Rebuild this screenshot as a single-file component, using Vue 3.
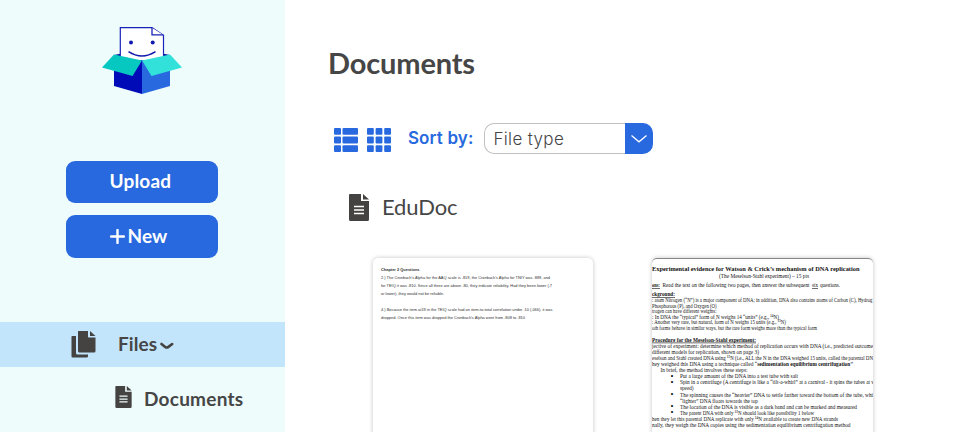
<script setup>
const chapterLines = [
  { t: 'Chapter 2 Questions', x: 8, y: 12.6, w: 38.5, b: true },
  { t: "2.) The Cronbach's Alpha for the AAQ scale is .819, the Cronbach's Alpha for TNIY was .889, and", x: 8, y: 20.6, w: 169 },
  { t: 'for TEIQ it was .810. Since all three are above .80, they indicate reliability. Had they been lower (.7', x: 8, y: 28.6, w: 171 },
  { t: 'or lower), they would not be reliable.', x: 8, y: 36.6, w: 63 },
  { t: '4.) Because the item at19 in the TEIQ scale had an item-to-total correlation under .10 (.066), it was', x: 8, y: 52.5, w: 171.5 },
  { t: "dropped. Once this item was dropped the Cronbach's Alpha went from .808 to .810", x: 8, y: 60.5, w: 144 }
]
const dnaLines = [
  { t: 'Experimental evidence for Watson & Crick’s mechanism of DNA replication', x: 0, y: 13.4, w: 207.5, b: true, s: 7 },
  { t: '(The Meselson-Stahl experiment) – 15 pts', x: 67, y: 19.8, w: 90 },
  { t: 'ons:', x: 0, y: 29.4, w: 8, b: true, u: true },
  { t: 'Read the text on the following two pages, then answer the subsequent', x: 10.5, y: 29.4, w: 147 },
  { t: 'six', x: 160, y: 29.4, w: 6, u: true },
  { t: 'questions.', x: 168, y: 29.4, w: 20 },
  { t: 'ckground:', x: 0, y: 38.4, w: 23, b: true, u: true },
  { t: ': atom Nitrogen (“N”) is a major component of DNA; in addition, DNA also contains atoms of Carbon (C), Hydrog', x: 0, y: 44.4, w: 220.5 },
  { t: 'Phosphorous (P), and Oxygen (O)', x: 0, y: 50, w: 64.5 },
  { t: 'trogen can have different weights:', x: 0, y: 55.4, w: 64.5 },
  { t: ': In DNA the “typical” form of N weighs 14 “units” (e.g., ¹⁴N)', x: 0, y: 60.8, w: 127 },
  { t: ': Another very rare, but natural, form of N weighs 15 units (e.g., ¹⁵N)', x: 0, y: 66.2, w: 134 },
  { t: 'oth forms behave in similar ways, but the rare form weighs more than the typical form', x: 0, y: 71.8, w: 165 },
  { t: 'Procedure for the Meselson-Stahl experiment:', x: 0, y: 83.6, w: 104, b: true, u: true },
  { t: 'jective of experiment: determine which method of replication occurs with DNA (i.e., predicted outcome', x: 0, y: 89.8, w: 221 },
  { t: 'different models for replication, shown on page 3)', x: 0, y: 95.8, w: 107 },
  { t: 'eselson and Stahl created DNA using ¹⁵N (i.e., ALL the N in the DNA weighed 15 units, called the parental DN', x: 0, y: 102, w: 221 },
  { t: 'hey weighed this DNA using a technique called “', x: 0, y: 108, w: 105 },
  { t: 'sedimentation equilibrium centrifugation', x: 105.2, y: 108, w: 93, b: true },
  { t: '”', x: 198.4, y: 108, w: 2.6 },
  { t: 'In brief, the method involves these steps:', x: 8.5, y: 114.2, w: 87 },
  { t: '•', x: 18.5, y: 120.6, w: 3, s: 8 },
  { t: 'Put a large amount of the DNA into a test tube with salt', x: 28, y: 120.2, w: 118 },
  { t: '•', x: 18.5, y: 126.8, w: 3, s: 8 },
  { t: 'Spin in a centrifuge (A centrifuge is like a “tilt-a-whirl” at a carnival - it spins the tubes at v', x: 28, y: 126.4, w: 194 },
  { t: 'speed)', x: 28, y: 132.4, w: 13.5 },
  { t: '•', x: 18.5, y: 139, w: 3, s: 8 },
  { t: 'The spinning causes the “heavier” DNA to settle farther toward the bottom of the tube, whi', x: 28, y: 138.6, w: 193 },
  { t: '“lighter” DNA floats towards the top', x: 28, y: 144.6, w: 78 },
  { t: '•', x: 18.5, y: 151.2, w: 3, s: 8 },
  { t: 'The location of the DNA is visible as a dark band and can be marked and measured', x: 28, y: 150.8, w: 177 },
  { t: '•', x: 18.5, y: 157.4, w: 3, s: 8 },
  { t: 'The parent DNA with only ¹⁵N should look like possibility 1 below', x: 28, y: 157, w: 134 },
  { t: 'hen they let this parental DNA replicate with only ¹⁴N available to create new DNA strands', x: 0, y: 163.2, w: 186 },
  { t: 'nally, they weigh the DNA copies using the sedimentation equilibrium centrifugation method', x: 0, y: 169.2, w: 198.5 }
]
</script>

<template>
  <div class="app">
    <aside class="sidebar">
      <svg class="logo" viewBox="0 0 105 90" width="105" height="90">
        <path d="M24 40l10-2h36l10 2v15H24z" fill="#061a9c" />
        <path d="M30.3 12.7H62l11.5 7.6V48H30.3z" fill="#fff" stroke="#1722b8" stroke-width="1.2" />
        <path d="M62 12.7v7.2h11.3" fill="#fff" stroke="#1722b8" stroke-width="1.3" />
        <circle cx="41" cy="27.4" r="2" fill="#1018b0" />
        <circle cx="62.7" cy="27.4" r="2" fill="#1018b0" />
        <path d="M38.5 36.6q13.400 8.700 27 0" fill="none" stroke="#1018b0" stroke-width="1.5" />
        <path d="M24 50l28-5v34l-28-8z" fill="#000bb8" />
        <path d="M80 50l-28-5v34l28-8z" fill="#2869e0" />
        <path d="M24 39.500l28 6-9.500 15.600L12 52.500z" fill="#06c8c0" />
        <path d="M80 39.500l-28 6 9.500 15.600L92 52.500z" fill="#32e2da" />
      </svg>
      <div class="actions">
        <button class="btn"><span class="upload">Upload</span></button>
        <button class="btn">
          <svg class="plus" viewBox="0 0 15 15" width="15" height="15"><path d="M7.500 1v13M1 7.500h13" /></svg>
          <span class="new">New</span>
        </button>
      </div>
      <nav>
        <div class="nav-row files">
          <svg viewBox="0 0 25 27" width="25" height="27" fill="#454342">
            <path d="M1 5h4v17q0 1.500 1.500 1.500H17v1.700q0 1.300-1.300 1.300H1.500Q0.500 26.500 .5 25.500V5.500Z" />
            <path d="M7.800 0H17v5.800q0 .8.800.8h6.700V20q0 1.500-1.500 1.500H8.500Q7 21.500 7 20V.8Q7 0 7.800 0Z" />
            <path d="M19 0l5.500 5H19z" />
          </svg>
          <span class="files-label">Files</span>
          <svg class="caret" viewBox="0 0 14 8" width="14" height="8"><path d="M1.500 2l3.700 2.900q1.600 1.200 3.200 0L12.200 2" /></svg>
        </div>
        <div class="nav-row sub">
          <svg viewBox="0 0 20 27" width="17" height="22">
            <path d="M1 0h11v7h8v18.500q0 1.500-1.500 1.500h-17Q0 27 0 25.500V1Q0 0 1 0zM14 0l6 5.500h-6z" fill="#454342" />
            <path d="M5 12.500h10M5 16h10M5 19.500h10" stroke="#eefcfc" stroke-width="1.500" />
          </svg>
          <span class="documents-label">Documents</span>
        </div>
      </nav>
    </aside>

    <main class="content">
      <h1><span>Documents</span></h1>
      <div class="toolbar">
        <svg class="list-icon" viewBox="0 0 24 24" width="24" height="24" fill="#2869e0">
          <template v-for="y in [0, 8.600, 17.200]" :key="y">
            <rect x="0" :y="y" width="7" height="6.800" rx="1" />
            <rect x="8.500" :y="y" width="15.500" height="6.800" rx="1" />
          </template>
        </svg>
        <svg class="grid-icon" viewBox="0 0 24 24" width="24" height="24" fill="#2869e0">
          <template v-for="y in [0, 8.600, 17.200]" :key="y">
            <rect v-for="x in [0, 8.600, 17.200]" :key="x" :x="x" :y="y" width="6.800" height="6.800" rx="1" />
          </template>
        </svg>
        <span class="sort">Sort by:</span>
        <div class="select">
          <div class="value"><span>File type</span></div>
          <div class="arrow">
            <svg viewBox="0 0 18 10" width="18" height="10"><path d="M1.500 1.500L9 7.800l7.500-6.300" /></svg>
          </div>
        </div>
      </div>
      <div class="section">
        <svg viewBox="0 0 20 27" width="20" height="27">
          <path d="M1 0h11v7h8v18.500q0 1.500-1.500 1.500h-17Q0 27 0 25.500V1Q0 0 1 0zM14 0l6 5.500h-6z" fill="#454342" />
          <path d="M5 12.500h10M5 16h10M5 19.500h10" stroke="#fff" stroke-width="1.300" />
        </svg>
        <h2>EduDoc</h2>
      </div>
      <div class="cards">
        <article class="card">
          <svg class="page sans" viewBox="0 0 220 210" width="220" height="210">
            <text v-for="(l, i) in chapterLines" :key="i" :x="l.x" :y="l.y" :textLength="l.w" lengthAdjust="spacingAndGlyphs" :class="{ bold: l.b }">{{ l.t }}</text>
          </svg>
        </article>
        <article class="card dna">
          <svg class="page serif" viewBox="0 0 221 210" width="221" height="210">
            <text v-for="(l, i) in dnaLines" :key="i" :x="l.x" :y="l.y" :textLength="l.w" lengthAdjust="spacingAndGlyphs" :font-size="l.s || 6.2" :class="{ bold: l.b, under: l.u }">{{ l.t }}</text>
          </svg>
        </article>
      </div>
    </main>
  </div>
</template>

<style>
body { background: #fff; overflow: hidden; }
</style>

<style scoped>
.app { display: flex; height: 432px; overflow: hidden; font-family: Lato, "Open Sans", sans-serif; color: #464646; }
.app * { box-sizing: border-box; }
svg { display: block; flex: none; }
span { white-space: nowrap; }
.sidebar { width: 285px; flex: none; background: #eefcfc; }
.logo { margin: 15px 0 0 90px; }
.actions { display: flex; flex-direction: column; gap: 12px; margin: 55.600px 0 0 65.600px; width: 152px; }
.btn { height: 42.700px; display: flex; align-items: center; border: 0; border-radius: 9px; background: #2869e0; color: #fff; font: 700 19px/24px Lato, sans-serif; padding: 0 0 1px 44px; }
.upload { letter-spacing: .15px; }
.plus { margin-right: 3px; }
.plus path { stroke: #fff; stroke-width: 2.400; stroke-linecap: round; }
.new { letter-spacing: 0; }
nav { margin-top: 64px; }
.nav-row { display: flex; align-items: center; font-weight: 700; }
.files { height: 45px; background: #c2e5fb; padding-left: 71px; }
.files-label { margin: -2px 0 0 22px; font-size: 19px; letter-spacing: .1px; }
.caret { margin: 4px 0 0 3px; }
.caret path { fill: none; stroke: #454342; stroke-width: 2.600; stroke-linecap: round; }
.sub { height: 24px; margin-top: 18.500px; padding-left: 115px; }
.documents-label { font-size: 19px; margin: 2px 0 0 12px; letter-spacing: .25px; }
.content { flex: 1; min-width: 0; }
h1 { margin: 44px 0 0 43px; height: 38px; font-size: 29px; line-height: 38px; font-weight: 700; letter-spacing: -.15px; }
.toolbar { display: flex; align-items: center; height: 31px; margin: 41px 0 0 49.400px; }
.list-icon { margin-top: 2px; }
.grid-icon { margin: 2px 0 0 9px; }
.sort { margin: -1px 0 0 16.500px; width: 76px; color: #2869e0; font: 600 17px/24px Inter, sans-serif; letter-spacing: .15px; }
.select { display: flex; width: 169.500px; height: 31px; }
.value { flex: 1; border: 1.500px solid #c0c0c0; border-right: 0; border-radius: 10px 0 0 10px; padding-left: 8.500px; font: 300 17px/30px Inter, sans-serif; letter-spacing: .35px; }
.arrow { width: 28px; display: flex; align-items: center; justify-content: center; border-radius: 0 10px 10px 0; background: #2869e0; }
.arrow path { fill: none; stroke: #fff; stroke-width: 1.300; }
.section { display: flex; align-items: center; height: 30px; margin: 38px 0 0 64px; }
h2 { margin: 0 0 0 13px; font-size: 22px; line-height: 30px; font-weight: 400; letter-spacing: -.15px; }
.cards { display: flex; gap: 59px; margin: 36px 0 0 88px; }
.card { width: 220px; height: 210px; border-radius: 5px; overflow: hidden; box-shadow: 0 0 4px rgba(0, 0, 0, .24); }
.card.dna { width: 221px; border-top: 1px solid #888; }
.page { fill: #303030; }
.dna .page { margin-top: -1px; }
.sans { font-family: "Liberation Sans", sans-serif; font-size: 4.200px; }
.serif { font-family: "Liberation Serif", serif; fill: #111; }
.bold { font-weight: 700; }
.under { text-decoration: underline; }
</style>
